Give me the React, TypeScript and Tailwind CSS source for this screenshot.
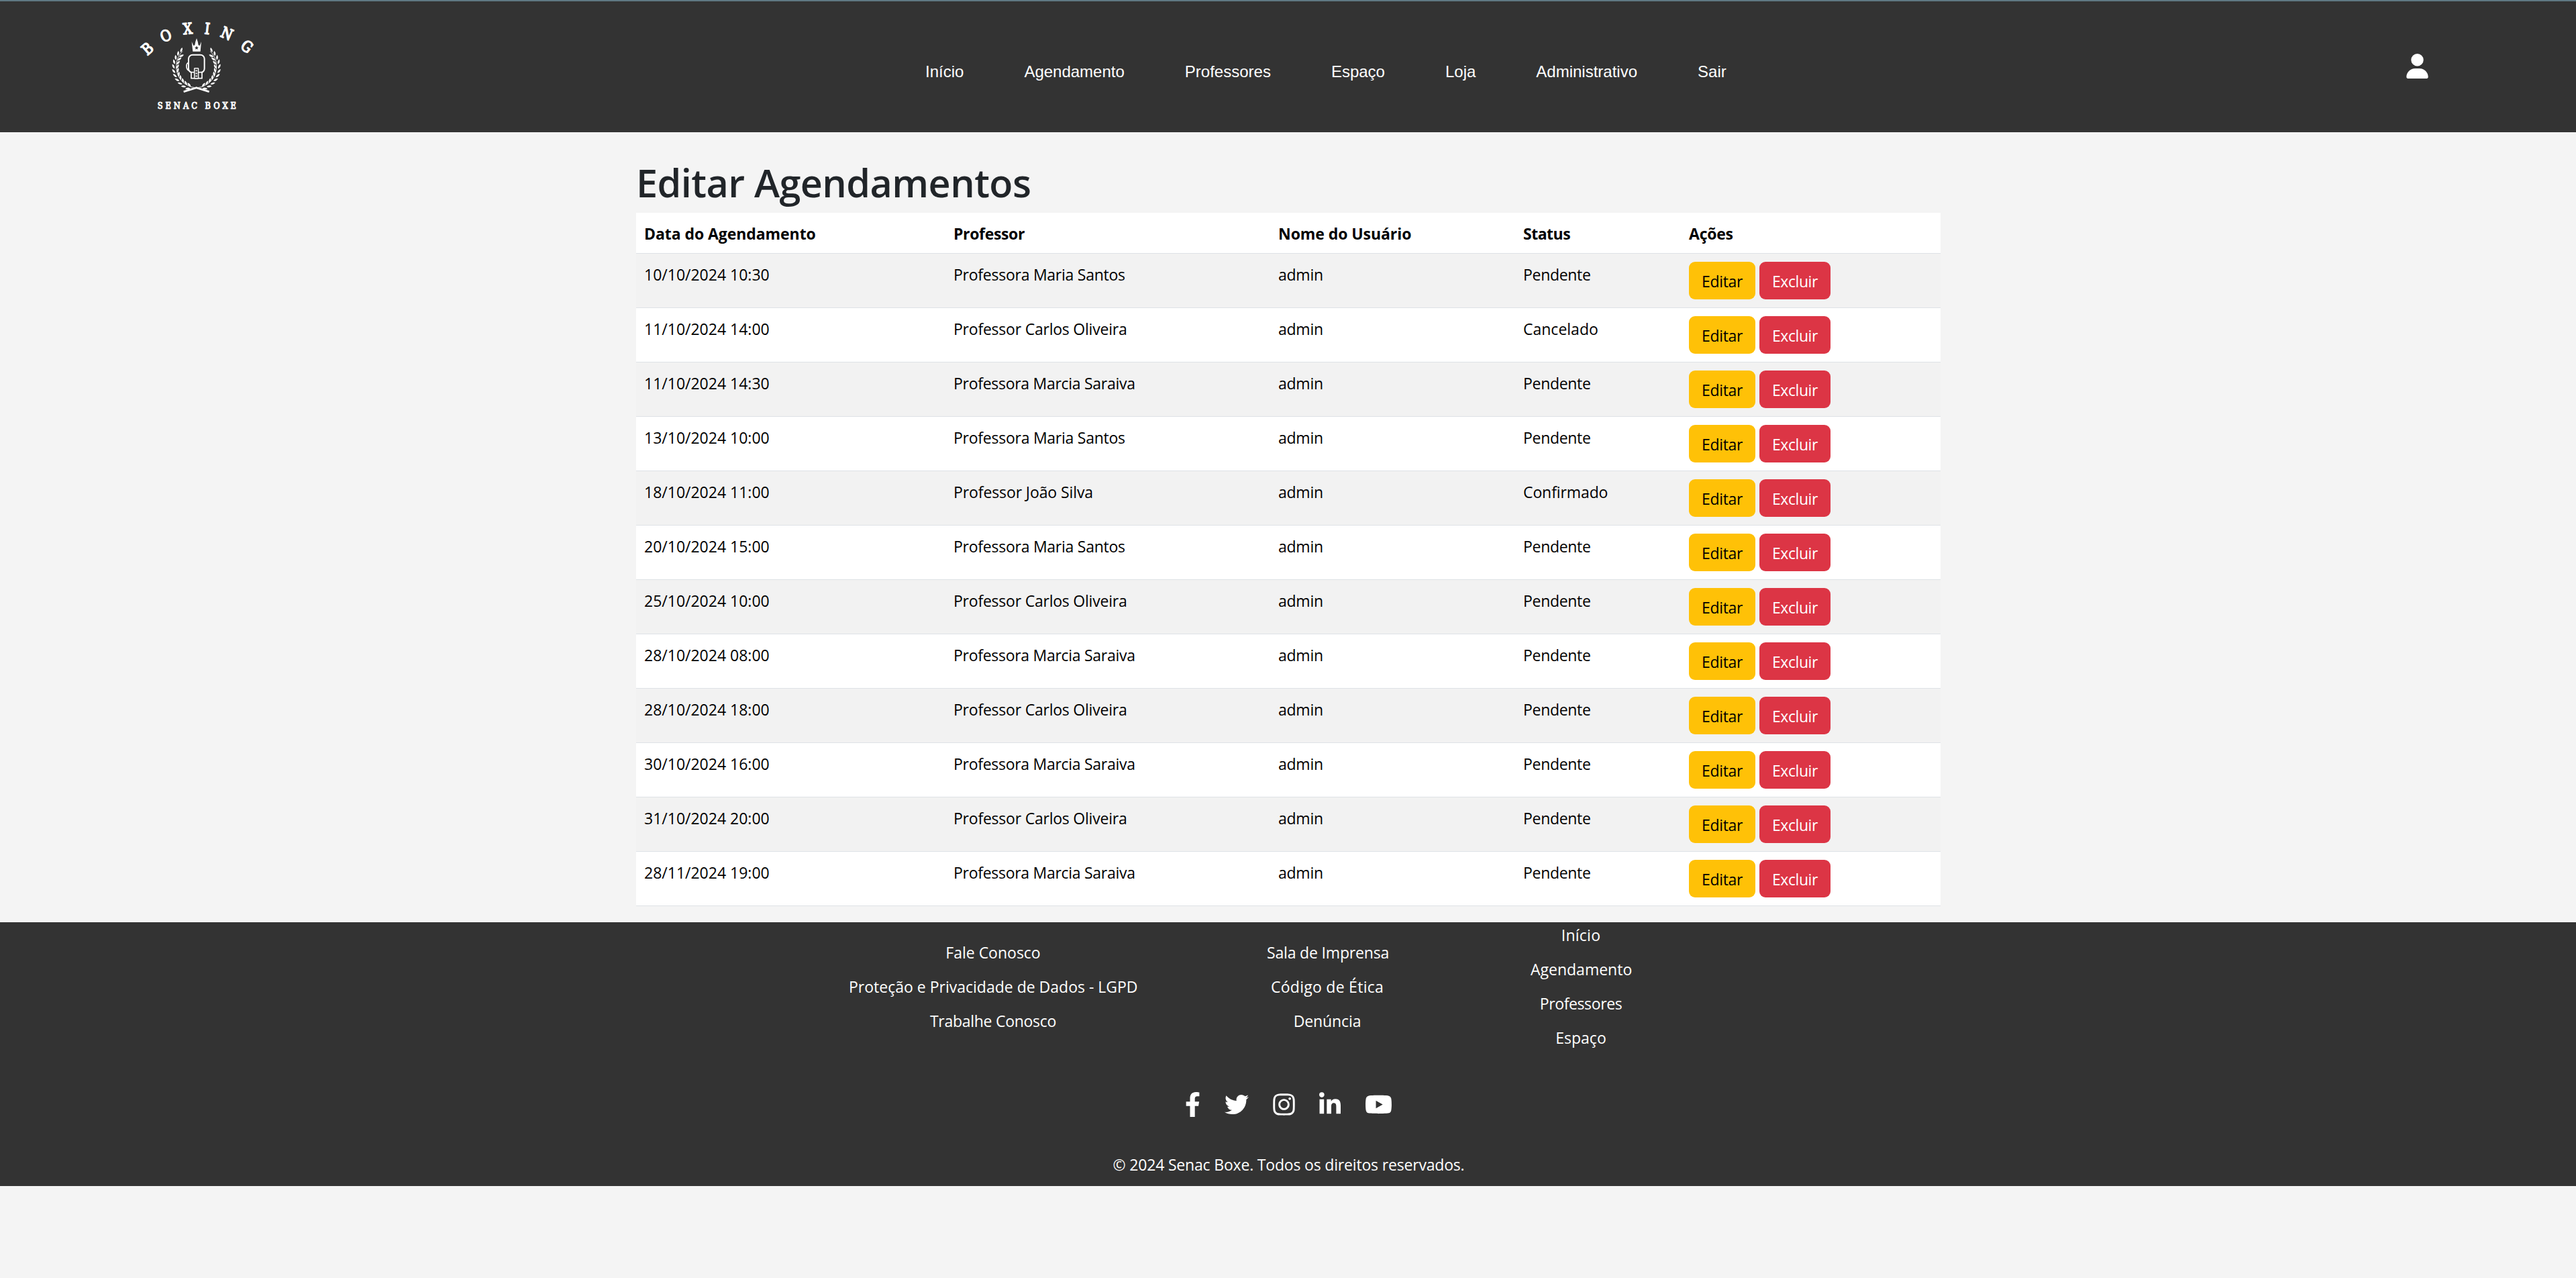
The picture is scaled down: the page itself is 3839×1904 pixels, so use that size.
import { FaFacebookF, FaTwitter, FaInstagram, FaLinkedinIn, FaYoutube } from "react-icons/fa";
import { FaUser } from "react-icons/fa6";

const navItems = ["Início", "Agendamento", "Professores", "Espaço", "Loja", "Administrativo", "Sair"];

const tracking: Record<string, string> = {
  "Professora Maria Santos": "tracking-[-0.25px]",
  "Professor Carlos Oliveira": "tracking-[-0.22px]",
  "Professora Marcia Saraiva": "tracking-[-0.28px]",
  "Professor João Silva": "tracking-[-0.1px]",
  admin: "tracking-[-0.24px]",
  Pendente: "tracking-[-0.31px]",
  Confirmado: "tracking-[-0.1px]",
  "Trabalhe Conosco": "tracking-[-0.28px]",
  "Sala de Imprensa": "tracking-[-0.17px]",
  "Código de Ética": "tracking-[0.27px]",
  Denúncia: "tracking-[-0.1px]",
  Início: "tracking-[0.27px]",
  Professores: "tracking-[-0.38px]",
  "Data do Agendamento": "tracking-[-0.07px]",
  Professor: "tracking-[-0.34px]",
  Status: "tracking-[-0.5px]",
  Ações: "tracking-[-0.23px]",
  "Nome do Usuário": "tracking-[-0.07px]",
};

const headings = ["Data do Agendamento", "Professor", "Nome do Usuário", "Status", "Ações"];

const rows = [
  ["10/10/2024 10:30", "Professora Maria Santos", "Pendente"],
  ["11/10/2024 14:00", "Professor Carlos Oliveira", "Cancelado"],
  ["11/10/2024 14:30", "Professora Marcia Saraiva", "Pendente"],
  ["13/10/2024 10:00", "Professora Maria Santos", "Pendente"],
  ["18/10/2024 11:00", "Professor João Silva", "Confirmado"],
  ["20/10/2024 15:00", "Professora Maria Santos", "Pendente"],
  ["25/10/2024 10:00", "Professor Carlos Oliveira", "Pendente"],
  ["28/10/2024 08:00", "Professora Marcia Saraiva", "Pendente"],
  ["28/10/2024 18:00", "Professor Carlos Oliveira", "Pendente"],
  ["30/10/2024 16:00", "Professora Marcia Saraiva", "Pendente"],
  ["31/10/2024 20:00", "Professor Carlos Oliveira", "Pendente"],
  ["28/11/2024 19:00", "Professora Marcia Saraiva", "Pendente"],
];

function Branch() {
  const cx = 338;
  const cy = 295;
  const leaves = [];
  for (let i = 0; i < 11; i++) {
    const deg = 112 + i * 11.7;
    const a = (deg * Math.PI) / 180;
    const r = 96;
    const put = (rr: number, tilt: number, key: string) => {
      const x = cx + rr * Math.cos(a);
      const y = cy + rr * Math.sin(a);
      return (
        <path key={key} d="M-11 0Q-2 -9 12 -1Q2 8 -11 0Z" transform={`translate(${x} ${y}) rotate(${deg + 90 + tilt})`} />
      );
    };
    leaves.push(put(r + 6, -28, `o${i}`));
    if (i < 10) leaves.push(put(r - 12, 28, `i${i}`));
  }
  return (
    <g>
      {leaves}
      <path d="M338 387A96 96 0 0 1 276 223" fill="none" stroke="#fff" strokeWidth="2.5" />
      <path d="M396 400L338 382L334 389L394 408Z" />
    </g>
  );
}

function Logo() {
  const arc: [string, number, number, number][] = [
    ["B", 118, 217, -41],
    ["O", 201, 158, -22],
    ["X", 299, 127, -5],
    ["I", 387, 127, 6],
    ["N", 475, 149, 23],
    ["G", 565, 207, 38],
  ];
  return (
    <svg viewBox="0 0 720 585" className="h-[195px] w-[240px] fill-white font-['DejaVu_Serif','Liberation_Serif',serif]">
      {arc.map(([c, x, y, r]) => (
        <text key={c} fontSize="68" textAnchor="middle" stroke="#fff" strokeWidth="4.5" transform={`translate(${x} ${y - 6}) rotate(${r}) translate(0 25) scale(0.86 1)`}>
          {c}
        </text>
      ))}
      <Branch />
      <g transform="translate(676 0) scale(-1 1)">
        <Branch />
      </g>
      <path d="M322 224L317 180L325 198L331 196L334 180L339 165L344 180L347 196L353 198L360 180L356 224Z" />
      <path d="M339 199l2.600 5.500 6 .8-4.400 4.200 1 6-5.200-2.900-5.200 2.900 1-6-4.400-4.200 6-.8z" className="fill-[#333]" />
      <rect x="303" y="239" width="71" height="80" rx="18" fill="none" stroke="#fff" strokeWidth="6" />
      <path d="M304 273Q293 276 294 292Q295 306 306 310" fill="none" stroke="#fff" strokeWidth="5" />
      <rect x="315" y="317" width="48" height="27" stroke="#fff" strokeWidth="5" className="fill-[#333]" />
      <rect x="329" y="299" width="18" height="46" rx="2" stroke="#fff" strokeWidth="4" className="fill-[#555]" />
      <path d="M334 310h8M334 322h8M334 334h8" stroke="#fff" strokeWidth="4" />
      <g transform="translate(164 479) scale(0.86 1)">
        <text fontSize="40" stroke="#fff" strokeWidth="3" textLength="409" lengthAdjust="spacing">
          SENAC BOXE
        </text>
      </g>
    </svg>
  );
}

function FooterColumn({ items, className }: { items: string[]; className: string }) {
  return (
    <ul className={className}>
      {items.map((t) => (
        <li key={t} className={`mb-[15px] text-center leading-9 whitespace-nowrap ${tracking[t] ?? ""}`}>
          {t}
        </li>
      ))}
    </ul>
  );
}

export default function App() {
  return (
    <div className="min-h-[1904px] w-[3839px] bg-[#f4f4f4] font-['Open_Sans','Noto_Sans',sans-serif] text-[23px] leading-9 text-black">
      <header className="flex h-[197px] items-start border-t-2 border-[#5f7883] bg-[#333] text-white">
        <div className="ml-[180px]">
          <Logo />
        </div>
        <nav className="mt-[87px] ml-[959px] flex gap-[90px] font-['Liberation_Sans',Arial,sans-serif] text-[24px] leading-9">
          {navItems.map((t) => (
            <a key={t} href="#">
              {t}
            </a>
          ))}
        </nav>
        <FaUser className="mt-[78px] mr-[220px] ml-auto h-[37px] w-[33px]" />
      </header>

      <main className="ml-[948px] w-[1944px] pt-[39px]">
        <h1 className="mb-[9px] text-[57.500px] leading-[72px] font-semibold tracking-[-0.55px] text-[#212529]">Editar Agendamentos</h1>
        <table className="w-full table-fixed border-separate border-spacing-0 bg-white text-left">
          <colgroup>
            <col className="w-[461px]" />
            <col className="w-[484px]" />
            <col className="w-[365px]" />
            <col className="w-[247px]" />
            <col className="w-[387px]" />
          </colgroup>
          <thead>
            <tr>
              {headings.map((h) => (
                <th key={h} className={`border-b border-[#dee2e6] px-3 pt-[13px] pb-[11px] font-bold ${tracking[h]}`}>
                  {h}
                </th>
              ))}
            </tr>
          </thead>
          <tbody>
            {rows.map(([date, teacher, status]) => (
              <tr key={date} className="align-top odd:bg-[#f2f2f2] [&>td]:border-b [&>td]:border-[#dee2e6] [&>td]:px-3">
                <td className="pt-[13px]">{date}</td>
                <td className={`pt-[13px] ${tracking[teacher]}`}>{teacher}</td>
                <td className={`pt-[13px] ${tracking["admin"]}`}>admin</td>
                <td className={`pt-[13px] ${tracking[status] ?? ""}`}>{status}</td>
                <td className="py-3">
                  <div className="flex gap-[6px]">
                    <button className="h-14 w-[99px] rounded-[9px] bg-[#ffc107] pt-[2px] tracking-[-0.33px]">Editar</button>
                    <button className="h-14 w-[106px] rounded-[9px] bg-[#dc3545] pt-[2px] tracking-[-0.43px] text-white">Excluir</button>
                  </div>
                </td>
              </tr>
            ))}
          </tbody>
        </table>
      </main>

      <footer className="mt-6 h-[393px] bg-[#333] text-white">
        <div className="ml-[1265px] flex h-[253px] items-start pt-px">
          <FooterColumn className="mt-[26px] w-[430px]" items={["Fale Conosco", "Proteção e Privacidade de Dados - LGPD", "Trabalhe Conosco"]} />
          <FooterColumn className="mt-[26px] ml-[193px] w-[180px]" items={["Sala de Imprensa", "Código de Ética", "Denúncia"]} />
          <FooterColumn className="ml-[213px] w-[150px]" items={["Início", "Agendamento", "Professores", "Espaço"]} />
        </div>
        <div className="flex justify-center gap-9 pl-[2px] [&>svg]:h-[37px]">
          <FaFacebookF className="w-[23px]" />
          <FaTwitter className="w-9" />
          <FaInstagram className="w-[33px]" />
          <FaLinkedinIn className="w-8" />
          <FaYoutube className="w-[41px]" />
        </div>
        <p className="mt-[53px] pl-[2px] text-center tracking-[-0.18px]">© 2024 Senac Boxe. Todos os direitos reservados.</p>
      </footer>
    </div>
  );
}
